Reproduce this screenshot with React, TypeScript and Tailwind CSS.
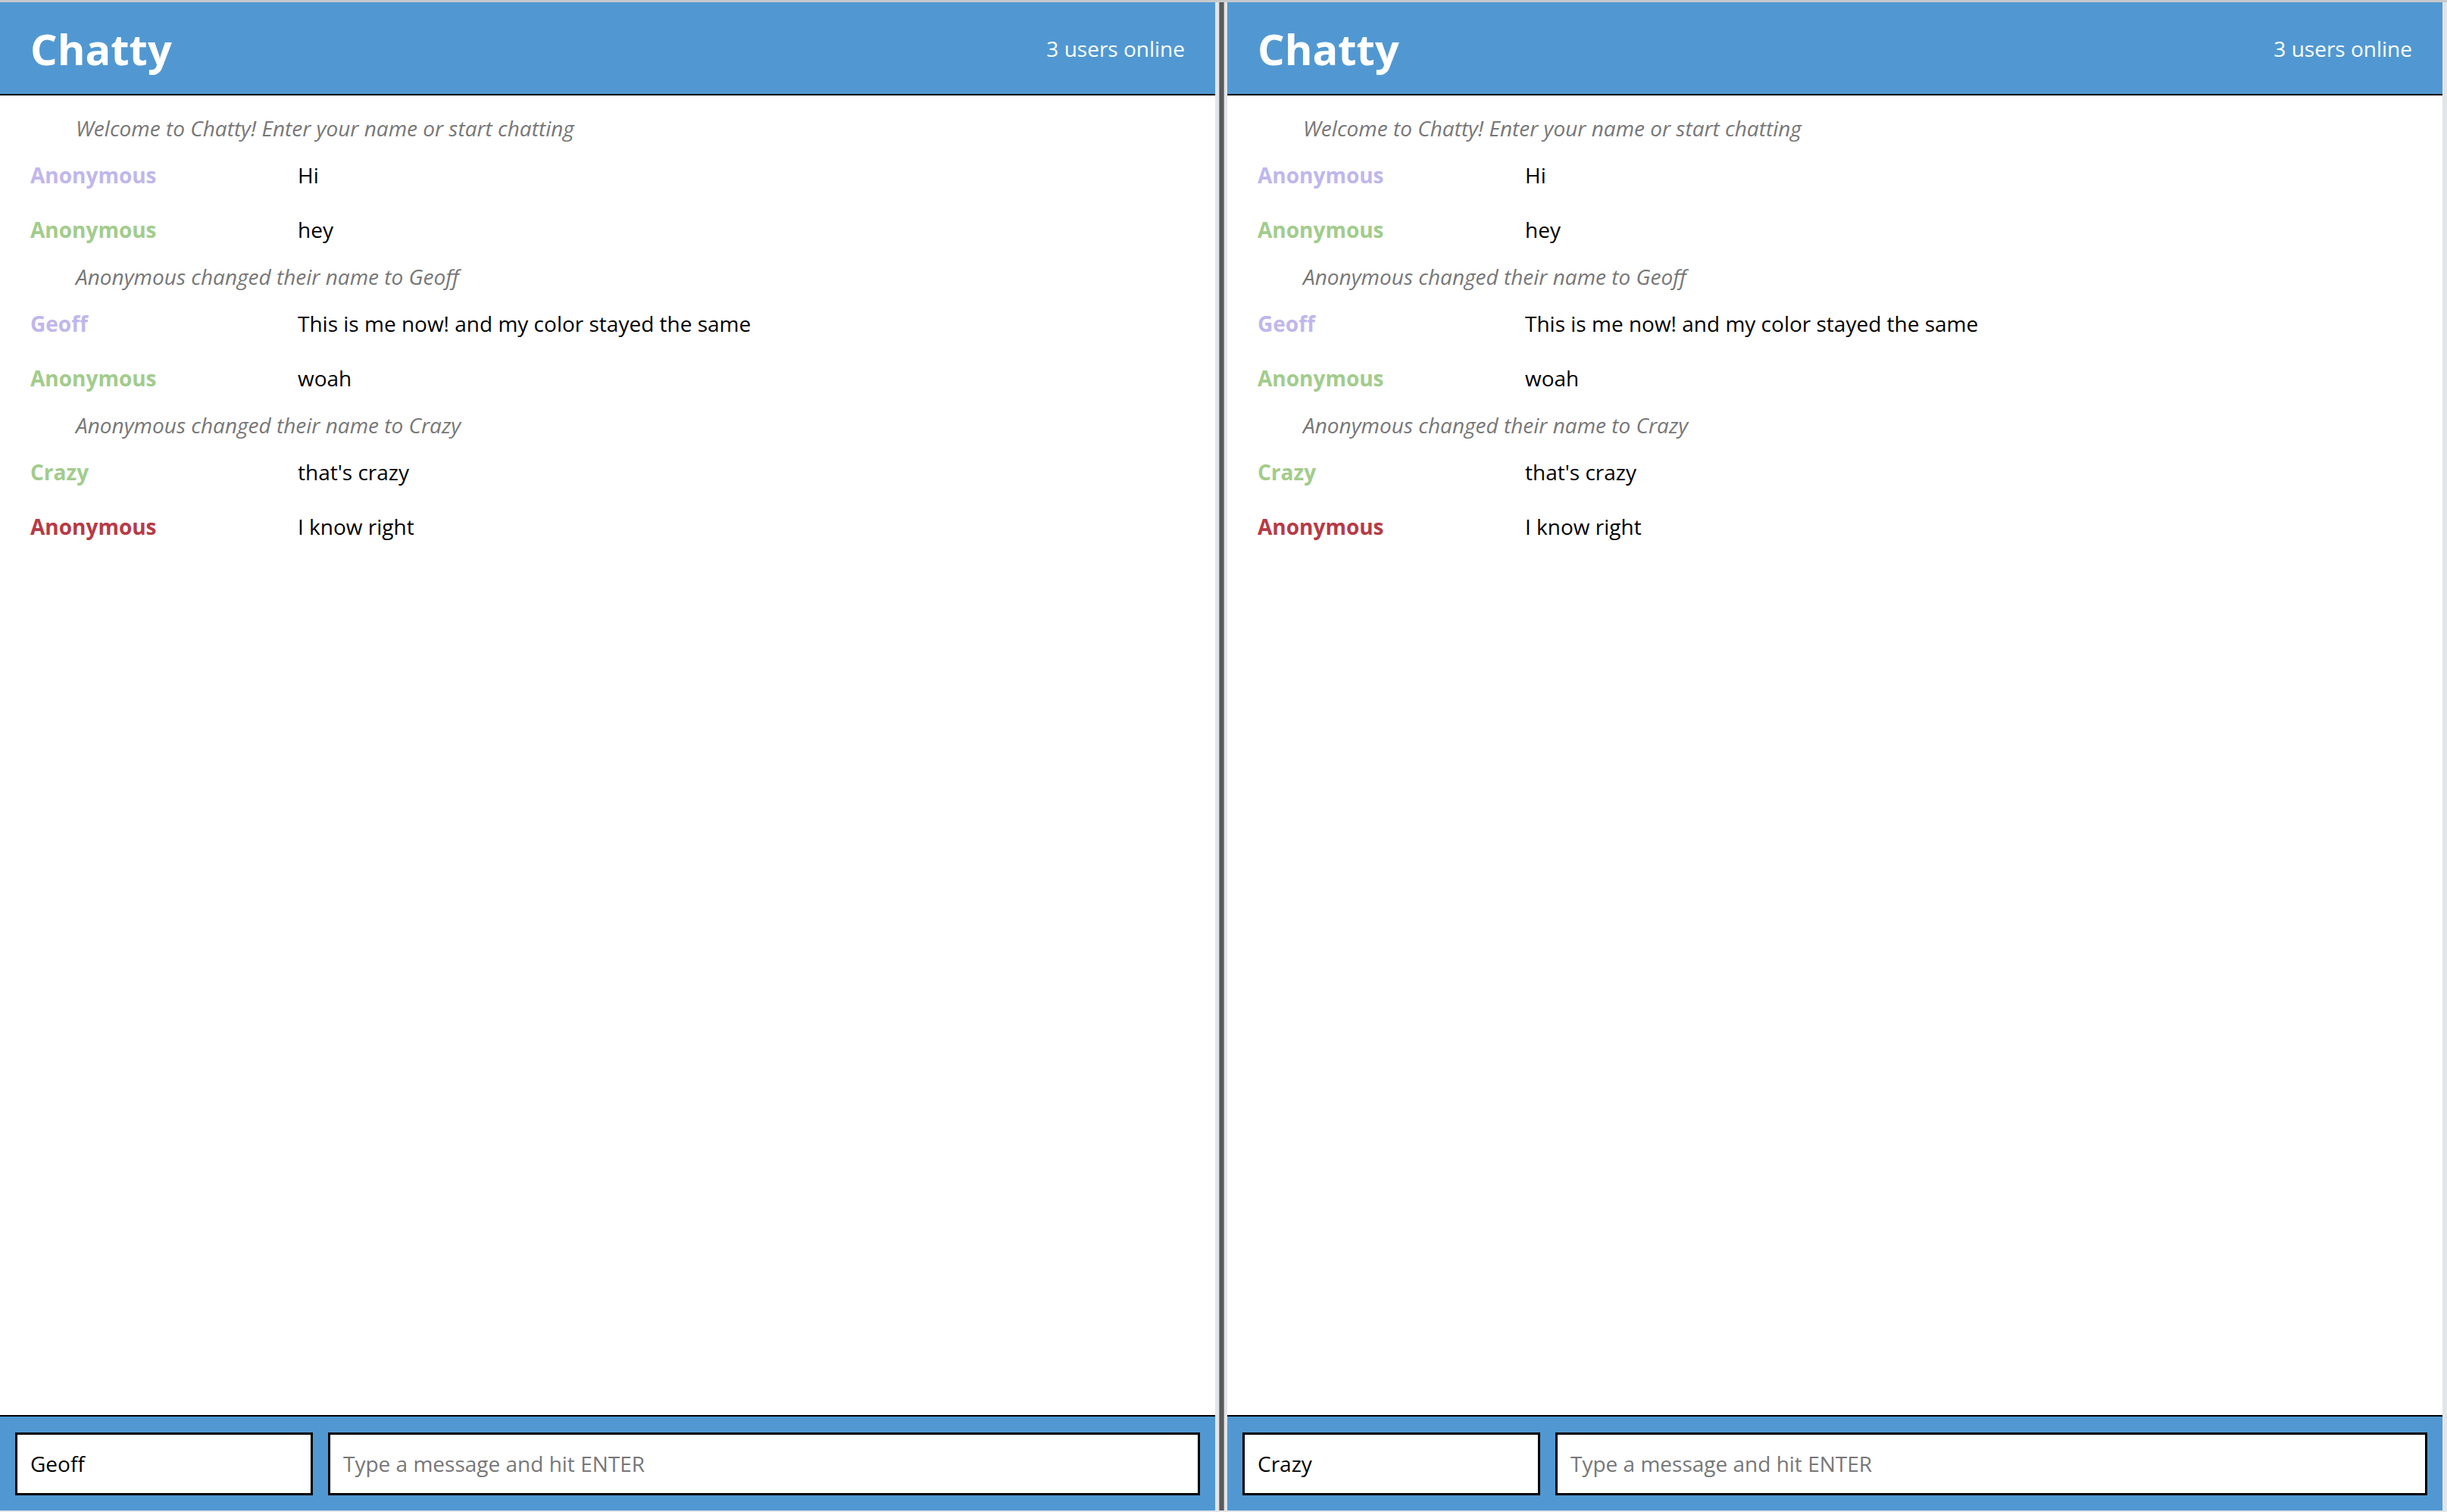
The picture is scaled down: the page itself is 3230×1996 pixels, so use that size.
import React from 'react';

type Entry =
  | { kind: 'system'; text: string }
  | { kind: 'message'; user: string; color: string; text: string };

const entries: Entry[] = [
  { kind: 'system', text: 'Welcome to Chatty! Enter your name or start chatting' },
  { kind: 'message', user: 'Anonymous', color: 'text-[#bfb7ec]', text: 'Hi' },
  { kind: 'message', user: 'Anonymous', color: 'text-[#a2cc8c]', text: 'hey' },
  { kind: 'system', text: 'Anonymous changed their name to Geoff' },
  { kind: 'message', user: 'Geoff', color: 'text-[#bfb7ec]', text: 'This is me now! and my color stayed the same' },
  { kind: 'message', user: 'Anonymous', color: 'text-[#a2cc8c]', text: 'woah' },
  { kind: 'system', text: 'Anonymous changed their name to Crazy' },
  { kind: 'message', user: 'Crazy', color: 'text-[#a2cc8c]', text: "that's crazy" },
  { kind: 'message', user: 'Anonymous', color: 'text-[#b73a45]', text: 'I know right' },
];

const ChatWindow: React.FC<{ name: string }> = ({ name }) => {
  return (
    <div className="w-[1604px] flex flex-col bg-white">
      <nav className="h-[123px] flex-shrink-0 flex items-center justify-between bg-[#5198d2] border-b-2 border-black px-[40px]">
        <span className="text-[56px] font-bold text-white leading-normal">Chatty</span>
        <span className="text-[28px] text-white leading-normal">3 users online</span>
      </nav>

      <main className="flex-1 pt-[17px]">
        {entries.map((entry, i) =>
          entry.kind === 'system' ? (
            <div key={i} className="h-[52px] flex items-center pl-[100px] text-[28px] italic text-[#777777]">
              {entry.text}
            </div>
          ) : (
            <div key={i} className="h-[72px] flex items-center pl-[40px] text-[28px]">
              <span className={`w-[353px] flex-shrink-0 font-bold ${entry.color}`}>{entry.user}</span>
              <span className="text-black">{entry.text}</span>
            </div>
          )
        )}
      </main>

      <footer className="h-[126px] flex-shrink-0 flex items-center gap-[20px] bg-[#5198d2] border-t-2 border-black px-[20px]">
        <input
          defaultValue={name}
          className="w-[393px] h-[83px] flex-shrink-0 bg-white border-[3px] border-black px-[17px] text-[28px] text-black outline-none"
        />
        <input
          placeholder="Type a message and hit ENTER"
          className="flex-1 h-[83px] bg-white border-[3px] border-black px-[17px] text-[28px] text-black placeholder:text-[#777777] outline-none"
        />
      </footer>
    </div>
  );
}

export default function App() {
  return (
    <div
      className="w-[3230px] h-[1996px] flex bg-[#e2e5e9] border-t-[3px] border-[#c6c8cb] pb-[2px] overflow-hidden"
      style={{ fontFamily: '"Open Sans", "Noto Sans", sans-serif' }}
    >
      <ChatWindow name="Geoff" />
      <div className="w-[16px] flex-shrink-0 flex justify-center">
        <div className="w-[7px] h-full bg-[#5a5a5a] border-x border-[#888888]" />
      </div>
      <ChatWindow name="Crazy" />
    </div>
  );
}
